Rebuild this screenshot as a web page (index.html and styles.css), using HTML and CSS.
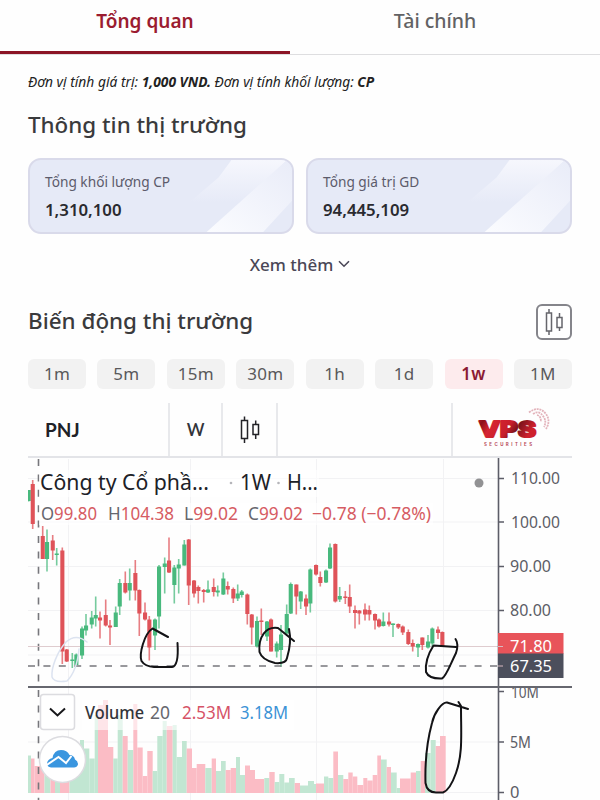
FILE: index.html
```html
<!DOCTYPE html>
<html lang="vi">
  <head>
    <meta charset="UTF-8" />
    <meta name="viewport" content="width=device-width, initial-scale=1.0" />
    <title>PNJ - Tổng quan</title>
    <link rel="stylesheet" href="styles.css">
  </head>
  <body>
    <nav class="tabs">
      <a class="tab active"><span>Tổng quan</span></a>
      <a class="tab"><span>Tài chính</span></a>
    </nav>

    <main>
      <p class="unit">Đơn vị tính giá trị: <b>1,000 VND.</b> Đơn vị tính khối lượng: <b>CP</b></p>

      <h2>Thông tin thị trường</h2>
      <div class="cards">
        <div class="card">
          <svg class="shine" viewBox="0 0 264 74" preserveAspectRatio="none">
            <defs>
              <linearGradient id="top" x1="0" y1="0" x2="0" y2="1">
                <stop offset="0" stop-color="#f6f7fd" />
                <stop offset="1" stop-color="#e6eaf7" />
              </linearGradient>
              <linearGradient id="low" x1="0" y1="1" x2="1" y2="0">
                <stop offset="0" stop-color="#fbfcff" />
                <stop offset="1" stop-color="#e9ecf8" />
              </linearGradient>
            </defs>
            <path fill="url(#top)" d="M203 0H259L216 44H160L190 18Z" />
            <path fill="url(#low)" d="M259 0H264V42L235 74H178Z" />
          </svg>
          <div class="label">Tổng khối lượng CP</div>
          <div class="value">1,310,100</div>
        </div>
        <div class="card">
          <svg class="shine" viewBox="0 0 264 74" preserveAspectRatio="none">
            <path fill="url(#top)" d="M203 0H259L216 44H160L190 18Z" />
            <path fill="url(#low)" d="M259 0H264V42L235 74H178Z" />
          </svg>
          <div class="label">Tổng giá trị GD</div>
          <div class="value">94,445,109</div>
        </div>
      </div>

      <div class="more">
        <span>Xem thêm</span>
        <svg width="12" height="8" viewBox="0 0 12 8"><path d="M1 1.2L6 6.2L11 1.2" /></svg>
      </div>

      <div class="chart-title">
        <h2>Biến động thị trường</h2>
        <button class="type">
          <svg width="20" height="28" viewBox="0 0 20 28">
            <path d="M2.500 5H7.500V23H2.500ZM5 1V5M5 23V27M13 9.500H18V19.500H13ZM15.500 5V9.500M15.500 19.500V23" />
          </svg>
        </button>
      </div>

      <div class="ranges">
        <button>1m</button>
        <button>5m</button>
        <button>15m</button>
        <button>30m</button>
        <button>1h</button>
        <button>1d</button>
        <button class="on">1w</button>
        <button>1M</button>
      </div>

      <div class="toolbar">
        <div class="symbol">PNJ</div>
        <div class="interval">W</div>
        <div class="style">
          <svg width="20" height="28" viewBox="0 0 20 28">
            <path d="M1.500 4.500H7.500V22.500H1.500ZM4.500 .5V4.500M4.500 22.500V27M13 8.500H18.500V18.500H13ZM15.700 4.500V8.500M15.700 18.500V23" />
          </svg>
        </div>
        <div class="space"></div>
        <div class="logo">
          <svg width="80" height="44" viewBox="0 0 80 44">
            <defs>
              <linearGradient id="red" x1="0" y1="0" x2="1" y2="0.3">
                <stop offset="0" stop-color="#c51b2a" />
                <stop offset=".12" stop-color="#8c101b" />
                <stop offset=".3" stop-color="#d52532" />
                <stop offset=".6" stop-color="#c81e2b" />
                <stop offset=".75" stop-color="#7e141c" />
                <stop offset="1" stop-color="#ce202d" />
              </linearGradient>
            </defs>
            <g class="globe">
              <path d="M56 4.500Q66 -3 73 6Q78 13 73 21" />
              <path d="M60 6Q66 2 70 8Q74 13 71 19" />
              <path d="M64 7Q68 8 68 14" />
            </g>
            <text class="brand" x="6" y="28.500" textLength="57" lengthAdjust="spacingAndGlyphs">VPS</text>
            <text class="sub" x="11" y="37.500" textLength="48">SECURITIES</text>
          </svg>
        </div>
      </div>

      <svg id="chart" width="544" height="342" viewBox="28 458 544 342">
        <g id="grid"></g>
        <g id="volume"></g>
        <path class="vline" d="M38.500 459V800" />
        <path class="last" d="M28 646.500H498" />
        <g id="candles"></g>
        <path class="hline" d="M28 666H498" />

        <rect class="veil" x="39" y="470" width="280" height="27" />
        <rect class="veil" x="39" y="503" width="394" height="22" />
        <rect class="veil" x="82" y="700" width="212" height="30" />

        <g class="title">
          <text x="40" y="490" textLength="169" lengthAdjust="spacingAndGlyphs">Công ty Cổ phầ...</text>
          <text x="240" y="490" textLength="31" lengthAdjust="spacingAndGlyphs">1W</text>
          <text x="287" y="490" textLength="31" lengthAdjust="spacingAndGlyphs">H...</text>
          <circle cx="231" cy="483" r="1.300" />
          <circle cx="278.500" cy="483" r="1.300" />
        </g>
        <g class="ohlc">
          <text x="41" y="520" textLength="56" lengthAdjust="spacingAndGlyphs"><tspan>O</tspan>99.80</text>
          <text x="108" y="520" textLength="66" lengthAdjust="spacingAndGlyphs"><tspan>H</tspan>104.38</text>
          <text x="184" y="520" textLength="54" lengthAdjust="spacingAndGlyphs"><tspan>L</tspan>99.02</text>
          <text x="248" y="520" textLength="55" lengthAdjust="spacingAndGlyphs"><tspan>C</tspan>99.02</text>
          <text x="312" y="520" textLength="119" lengthAdjust="spacingAndGlyphs">−0.78 (−0.78%)</text>
        </g>
        <circle class="dot" cx="479" cy="483" r="4.500" />

        <g class="axis">
          <path d="M498.500 458V800" />
          <path d="M498 478.500H504M498 522H504M498 566.500H504M498 610.500H504M498 691.500H504M498 742H504M498 792.500H504" />
          <text x="511" y="484" textLength="49" lengthAdjust="spacingAndGlyphs">110.00</text>
          <text x="511" y="527.500" textLength="49" lengthAdjust="spacingAndGlyphs">100.00</text>
          <text x="510" y="572" textLength="41" lengthAdjust="spacingAndGlyphs">90.00</text>
          <text x="510" y="616" textLength="41" lengthAdjust="spacingAndGlyphs">80.00</text>
          <text x="511" y="697.500" textLength="28" lengthAdjust="spacingAndGlyphs">10M</text>
          <text x="510" y="748" textLength="21" lengthAdjust="spacingAndGlyphs">5M</text>
          <text x="510" y="798">0</text>
        </g>
        <rect class="over" x="505" y="680" width="60" height="7" />
        <path class="divider" d="M28 687H572" />
        <g class="tags">
          <rect class="price" x="498" y="633" width="65.500" height="21" />
          <rect class="cursor" x="498" y="653.500" width="65.500" height="24.500" />
          <path d="M498 646.500H503M498 666H503" />
          <text x="510" y="651.500" textLength="42" lengthAdjust="spacingAndGlyphs">71.80</text>
          <text x="510" y="671.500" textLength="42" lengthAdjust="spacingAndGlyphs">67.35</text>
        </g>

        <g class="legend">
          <rect x="40.500" y="694.500" width="34" height="35" rx="3" />
          <path d="M50 708.500L57.500 715.500L65 708.500" />
          <text class="name" x="85" y="719" textLength="59" lengthAdjust="spacingAndGlyphs">Volume</text>
          <text class="len" x="150" y="719" textLength="20" lengthAdjust="spacingAndGlyphs">20</text>
          <text class="vol" x="182" y="719" textLength="49" lengthAdjust="spacingAndGlyphs">2.53M</text>
          <text class="avg" x="240" y="719" textLength="48" lengthAdjust="spacingAndGlyphs">3.18M</text>
        </g>

        <g class="tv">
          <circle cx="62.500" cy="759.500" r="23" />
          <path class="cloud" d="M51 767.500Q47 767 47 763.500Q47.500 759 52.500 758Q54 750 61 750Q67 750 69.500 755Q74 755 75 759.500Q78 761 78 764.500Q77 767.500 74 767.500Z" />
          <path class="trend" d="M46 765.500L58.500 757L66 763L71.500 756" />
        </g>

        <g class="pen">
          <path class="faint" d="M87 642Q76 633 66 642C57 652 51 668 52 677Q54 683 67 681Q77 671 79 649" />
          <path d="M168 637L152.500 628.500C144 634 139 654 141.500 661Q145 666.500 154 667H172Q179 666 177.500 643" />
          <path d="M294 641L278 628C266 626 258 637 259.500 652Q262 660 275 663Q286 664 287 658C290 648 291 638 289 629" />
          <path d="M455.500 639Q459 644 456 653C450 665 446 677 442 678.500Q429 679 426 672C425 662 430 651 433.500 645.500L456 647" />
          <path d="M468 709L447 702.500C442 702 434 713 432 723C426 745 425 765 425.500 783Q427 792.500 436 792.500H443Q450 790 456 773C463 753 461 735 461 706L458.500 702" />
        </g>
      </svg>
    </main>

    <script src="chart.js"></script>
  </body>
</html>
```
FILE: styles.css
```css
* {
  box-sizing: border-box;
}
body {
  margin: 0;
  height: 800px;
  overflow: hidden;
  background-color: #fefefe;
  color: #3a3a3c;
  font-family: "Noto Sans", "Open Sans", sans-serif;
}
h2 {
  margin: 0;
  font-size: 22.4px;
  line-height: 30px;
  font-weight: 500;
}
button {
  border: none;
  padding: 0;
  font-family: inherit;
}
svg {
  display: block;
}

.tabs {
  display: flex;
  height: 55px;
  border-bottom: 1px solid #dedee0;
}
.tab {
  width: 290px;
  height: 54px;
  padding-top: 7px;
  text-align: center;
  font-size: 19.5px;
  line-height: 28px;
  font-weight: 500;
  color: #626264;
}
.tab.active {
  color: #9b1c30;
  font-weight: 600;
  font-size: 19px;
  border-bottom: 3px solid #8b1426;
}

main {
  padding: 0 28px;
}
.unit {
  margin: 17px 0 0;
  font-size: 13.8px;
  line-height: 20px;
  font-style: italic;
  white-space: nowrap;
  color: #222;
}
main > h2 {
  margin-top: 18px;
}

.cards {
  display: flex;
  gap: 12px;
  margin-top: 18px;
}
.card {
  position: relative;
  flex: 1;
  height: 76px;
  padding: 11px 15px;
  border: 2px solid #d9daea;
  border-radius: 13px;
  background-color: #e6eaf7;
  overflow: hidden;
}
.shine {
  position: absolute;
  left: 0;
  top: 0;
  width: 100%;
  height: 100%;
}
.label,
.value {
  position: relative;
}
.label {
  font-size: 13.7px;
  line-height: 22px;
  color: #5c5b6b;
}
.value {
  margin-top: 5px;
  font-size: 16.8px;
  line-height: 24px;
  font-weight: 600;
  color: #2a2a30;
}

.more {
  display: flex;
  justify-content: center;
  align-items: center;
  gap: 5px;
  margin-top: 17px;
  height: 26px;
  font-size: 17px;
  font-weight: 500;
  color: #4a4757;
}
.more path {
  fill: none;
  stroke: #4a4757;
  stroke-width: 1.6;
}

.chart-title {
  display: flex;
  justify-content: space-between;
  align-items: center;
  margin-top: 27px;
  height: 36px;
}
.chart-title h2 {
  padding-bottom: 2px;
}
.type {
  display: flex;
  align-items: center;
  justify-content: center;
  width: 36px;
  height: 36px;
  border: 2px solid #85858b;
  border-radius: 6px;
  background: #fff;
}
.type path,
.style path {
  fill: none;
  stroke: #66666c;
  stroke-width: 1.5;
}
.style path {
  stroke: #222227;
}

.ranges {
  display: grid;
  grid-template-columns: repeat(8, 58px);
  justify-content: space-between;
  margin-top: 19px;
}
.ranges button {
  height: 30px;
  padding-bottom: 2px;
  border-radius: 6px;
  background-color: #f2f2f2;
  font-size: 17px;
  letter-spacing: 0.3px;
  color: #59595b;
}
.ranges .on {
  background-color: #fdebed;
  color: #8b1a33;
  font-weight: 600;
}

.toolbar {
  display: flex;
  height: 55px;
  margin-top: 14px;
  border-bottom: 2px solid #e3e4e8;
}
.toolbar > div {
  display: flex;
  align-items: center;
  justify-content: center;
  border-right: 2px solid #e8e9ec;
}
.toolbar .symbol {
  width: 142px;
  padding-left: 17px;
  justify-content: flex-start;
  font-size: 19px;
  font-weight: 700;
  color: #202127;
}
.toolbar .interval {
  width: 53px;
  font-size: 17px;
  font-weight: 600;
  color: #33343a;
}
.symbol,
.interval {
  font-family: Lato, sans-serif;
}
.toolbar .style {
  width: 55px;
}
.toolbar .space {
  width: 175px;
}
.toolbar .logo {
  flex: 1;
  border-right: none;
}
.brand {
  fill: url(#red);
  stroke: url(#red);
  stroke-width: 2.2;
  stroke-linejoin: round;
  font: 800 22px Inter, sans-serif;
}
.sub {
  fill: #b8495a;
  font: 700 4.4px Inter, sans-serif;
}
.globe path {
  fill: none;
  stroke: #e3b3bb;
  stroke-width: 1.8;
  stroke-dasharray: 2 0.8;
}

/* chart */
#chart {
  font-family: "Noto Sans", sans-serif;
}
#grid path {
  stroke: #f2f2f4;
}
.up {
  fill: #48b97d;
}
.down {
  fill: #df5359;
}
#candles .wick {
  opacity: 0.75;
}
#volume .up {
  fill: #c1e6d2;
}
#volume .down {
  fill: #fbbcc5;
}
.vline,
.hline {
  stroke: #77777c;
  stroke-width: 1.6;
  stroke-dasharray: 7 8.4;
}
.last {
  stroke: #dfcccf;
}
.veil {
  fill: #fff;
  opacity: 0.62;
}
.title {
  font-size: 22px;
  fill: #202127;
}
.title circle {
  fill: #b5b5ba;
}
.ohlc {
  font-size: 18px;
  fill: #d65c63;
}
.ohlc tspan {
  fill: #66676e;
}
.dot {
  fill: #929294;
}
.axis {
  font-size: 16.5px;
  fill: #5c5d66;
}
.axis path {
  fill: none;
  stroke: #5c5d68;
  stroke-width: 1.6;
}
.over {
  fill: #fefefe;
}
.divider {
  stroke: #66676f;
  stroke-width: 1.8;
}
.tags {
  font-size: 16.5px;
  fill: #fff;
}
.tags .price {
  fill: #e8545a;
}
.tags .cursor {
  fill: #4c4f5c;
}
.tags path {
  stroke: #d7b9c0;
}
.legend {
  font-size: 17.5px;
  fill: #33343a;
}
.legend rect {
  fill: #fff;
  stroke: #dcdce0;
  stroke-width: 1.5;
}
.legend path {
  fill: none;
  stroke: #18181b;
  stroke-width: 2;
}
.legend .name {
  font-weight: 500;
}
.legend .len {
  fill: #66676e;
}
.legend .vol {
  fill: #d65367;
}
.legend .avg {
  fill: #3c93d6;
}
.tv circle {
  fill: #fff;
  stroke: #dcdce0;
  stroke-width: 1.5;
}
.cloud {
  fill: #3a96df;
}
.trend {
  fill: none;
  stroke: #fff;
  stroke-width: 2;
}
.pen path {
  fill: none;
  stroke: #131316;
  stroke-width: 2;
  stroke-linecap: round;
  stroke-linejoin: round;
}
.pen .faint {
  stroke: #dce3f0;
  stroke-width: 1.5;
}
```
FILE: chart.js
```js
// x, high, low, body top, body bottom, 1 = up
const candles = [
  [28.7, 490, 501.5, 490, 501, 1], [32.7, 480, 529, 484, 524, 0],
  [42.7, 526, 559, 536, 559, 0], [47, 529.5, 571.5, 542, 559, 1],
  [52.7, 535, 560, 540.5, 550.5, 0], [56.7, 548, 565.5, 553.5, 555, 1],
  [62.3, 547.5, 664, 550.5, 651.5, 0], [66.7, 649, 662, 649.5, 661.5, 0],
  [72.3, 653, 668, 659.5, 661, 1], [76.3, 653.5, 665.5, 654.5, 665, 1],
  [82, 626.5, 659, 628.5, 655.5, 1], [86, 614, 635.5, 625.5, 630.5, 1],
  [91.7, 611, 628.5, 617.5, 624.5, 1], [95.7, 596.5, 626.5, 615, 618.5, 1],
  [100, 611.5, 638.5, 617.5, 620.5, 0], [105.7, 599.5, 626.5, 615, 625.5, 0],
  [110, 620, 645, 625.5, 627.5, 0], [115.7, 606.5, 627, 612.5, 627, 1],
  [119.7, 579, 615, 583, 606.5, 1], [125.3, 571.5, 593.5, 583, 592.5, 0],
  [129.7, 568.5, 600.5, 583, 590.5, 1], [135.3, 560, 600.5, 573, 590.5, 0],
  [139.3, 589.5, 636, 590, 613.5, 0], [145, 602.5, 620.5, 612.5, 619.5, 0],
  [149.3, 616, 660.5, 619.5, 647.5, 0], [155, 618.5, 650, 619.5, 635.5, 1],
  [159, 565, 628.5, 566.5, 616.5, 1], [164.7, 557.5, 593.5, 563.5, 567, 1],
  [169, 537.5, 573, 560.5, 572.5, 0], [174.3, 565, 603.5, 567.5, 585, 1],
  [178.7, 559, 593.5, 564.5, 568.5, 1], [184.3, 540, 565.5, 544.5, 565.5, 1],
  [188.7, 539, 605, 539.5, 585.5, 0], [194, 580, 597.5, 580.5, 593.5, 0],
  [198.3, 585.5, 603.5, 587, 591, 0], [203.7, 589, 602.5, 590, 592, 0],
  [208, 580.5, 593, 589.5, 592.5, 1], [213.7, 578.5, 596.5, 587, 592, 0],
  [217.7, 585.5, 596.5, 590.5, 592.5, 1], [223.3, 572.5, 595, 578.5, 594.5, 1],
  [227.7, 581.5, 594.5, 586, 589.5, 0], [233.3, 587.5, 603, 589, 598.5, 0],
  [237.7, 584.5, 601, 593.5, 598.5, 1], [241.7, 590, 597.5, 591.5, 595, 1],
  [247.3, 593.5, 624.5, 594.5, 614, 0], [251.7, 614, 644.5, 614.5, 627.5, 0],
  [257, 616.5, 647.5, 621, 646.5, 1], [261.3, 608.5, 635, 620.5, 622, 0],
  [267, 621, 641, 621.5, 636.5, 1], [271, 618.5, 651.5, 619.5, 651.5, 0],
  [276.7, 641.5, 657.5, 643.5, 651.5, 1], [281, 625, 667, 634.5, 650, 1],
  [286.7, 604.5, 635, 614, 633.5, 1], [290.7, 582.5, 614, 584, 613.5, 1],
  [296.3, 584.5, 614.5, 584.5, 596.5, 0], [300.7, 591, 609, 591.5, 601.5, 1],
  [306, 594.5, 615, 598.5, 606.5, 0], [310.3, 568.5, 612.5, 569.5, 603.5, 1],
  [316, 564.5, 575.5, 565, 574.5, 0], [320.3, 571.5, 586.5, 577, 583, 0],
  [326, 569.5, 583, 570.5, 582.5, 1], [330, 543.5, 569, 547.5, 568.5, 1],
  [335.3, 543.5, 602.5, 544, 601.5, 0], [339.7, 587, 602, 596, 599.5, 1],
  [345.3, 591, 604, 596.5, 598, 0], [349.7, 584.5, 613, 597, 606.5, 0],
  [355, 605.5, 628.5, 610, 613, 0], [359.3, 610, 624.5, 610.5, 613.5, 0],
  [365, 603.5, 620.5, 609.5, 614.5, 0], [369.3, 605.5, 620.5, 610, 614.5, 0],
  [375, 613.5, 629.5, 614, 620.5, 0], [379, 618.5, 627.5, 619.5, 626.5, 0],
  [383.3, 612.5, 626.5, 621.5, 626, 1], [389, 612.5, 626.5, 621.5, 624.5, 0],
  [393, 623.5, 637, 623.5, 625, 1], [398.3, 623.5, 629, 624, 627.5, 0],
  [402.7, 625.5, 635, 626.5, 632.5, 0], [408.3, 629.5, 645, 632, 644, 0],
  [412.7, 639.5, 651.5, 643, 646.5, 0], [418, 643.5, 657, 644, 647.5, 1],
  [422.3, 637.5, 650, 637.5, 645, 0], [428, 635, 648.5, 641.5, 647.5, 1],
  [432.3, 627.5, 646.5, 628.5, 643.5, 1], [438, 626.5, 639, 629.5, 633, 0],
  [442.3, 631.5, 646.5, 632, 646.5, 0],
];

// left, right, top, 1 = up
const volume = [
  [28, 31, 755.5, 1], [31, 34.5, 758.5, 0], [34.5, 44.5, 766, 0],
  [44.5, 50.5, 775, 1], [50.5, 55, 770, 0], [55, 60, 776, 1],
  [60, 69.5, 772, 0], [69.5, 80, 768, 1], [80, 84, 740, 1],
  [84, 89.3, 748.5, 1], [89.3, 94.7, 758.5, 1], [94.7, 98, 715, 1],
  [98, 103, 705, 0], [103, 108, 700, 0], [108, 113.3, 747, 0],
  [113.3, 117.7, 758.5, 1], [117.7, 122.7, 715, 1], [122.7, 127.7, 736, 0],
  [127.7, 133.3, 750, 1], [133.3, 137.3, 704, 0], [137.3, 142.7, 747.5, 0],
  [142.7, 147.3, 776, 0], [147.3, 152.7, 751, 0], [152.7, 157.3, 771, 1],
  [157.3, 162.7, 736, 1], [162.7, 166.7, 721, 1], [166.7, 172.7, 726, 0],
  [172.7, 176.7, 725, 1], [176.7, 182, 757, 1], [182, 186.7, 741, 1],
  [186.7, 192, 748.5, 0], [192, 196.7, 768, 0], [196.7, 205.3, 764, 0],
  [205.3, 211.7, 768, 1], [211.7, 216, 758.5, 0], [216, 221, 771, 1],
  [221, 225.7, 761, 1], [225.7, 230.7, 770, 0], [230.7, 236, 768, 0],
  [236, 240, 757, 1], [240, 245, 775, 1], [245, 250, 765.5, 0],
  [250, 255, 770, 0], [255, 264.3, 779, 0], [264.3, 269.3, 778, 1],
  [269.3, 274.7, 772, 0], [274.7, 279.3, 782, 1], [279.3, 284.3, 774, 1],
  [284.3, 289, 782.5, 1], [289, 294.7, 778, 1], [294.7, 300, 783, 0],
  [300, 308, 785.5, 1], [308, 314, 781, 1], [314, 316, 784, 1],
  [316, 324, 783.5, 0], [324, 328.3, 776.5, 1], [328.3, 333.3, 778, 1],
  [333.3, 338, 751.5, 0], [338, 343.3, 775, 1], [343.3, 348.3, 779, 0],
  [348.3, 352.7, 772.5, 0], [352.7, 357.3, 776.5, 0], [357.3, 363.3, 785, 0],
  [363.3, 367.3, 778, 0], [367.3, 372.7, 780.5, 0], [372.7, 377.3, 775, 0],
  [377.3, 381, 755.5, 0], [381, 386.7, 759.5, 1], [386.7, 391, 767, 0],
  [391, 396.7, 772.5, 1], [396.7, 400, 788, 1], [400, 410.7, 778.5, 0],
  [410.7, 416, 772.5, 0], [416, 420.7, 771, 1], [420.7, 425, 761, 0],
  [425, 430.7, 753, 1], [430.7, 435.7, 740, 1], [435.7, 440, 746, 0],
  [440, 445.7, 736, 0],
];

const cls = (up) => (up ? "up" : "down");

document.querySelector("#candles").innerHTML = candles
  .map(
    ([x, high, low, top, bottom, up]) => `
    <rect class="wick ${cls(up)}" x="${x - 0.8}" y="${high}" width="1.6" height="${low - high}" />
    <rect class="${cls(up)}" x="${x - 2}" y="${top}" width="4.1" height="${bottom - top}" />`
  )
  .join("");

document.querySelector("#volume").innerHTML = volume
  .map(
    ([left, right, top, up]) =>
      `<rect class="${cls(up)}" x="${left}" y="${top}" width="${right - left}" height="${793 - top}" />`
  )
  .join("");

document.querySelector("#grid").innerHTML =
  [478.5, 522, 566.5, 610.5, 655, 742, 792.5].map((y) => `<path d="M28 ${y}H498" />`).join("") +
  [68.5, 190.5, 316.5, 443.5].map((x) => `<path d="M${x} 459V800" />`).join("");
```
